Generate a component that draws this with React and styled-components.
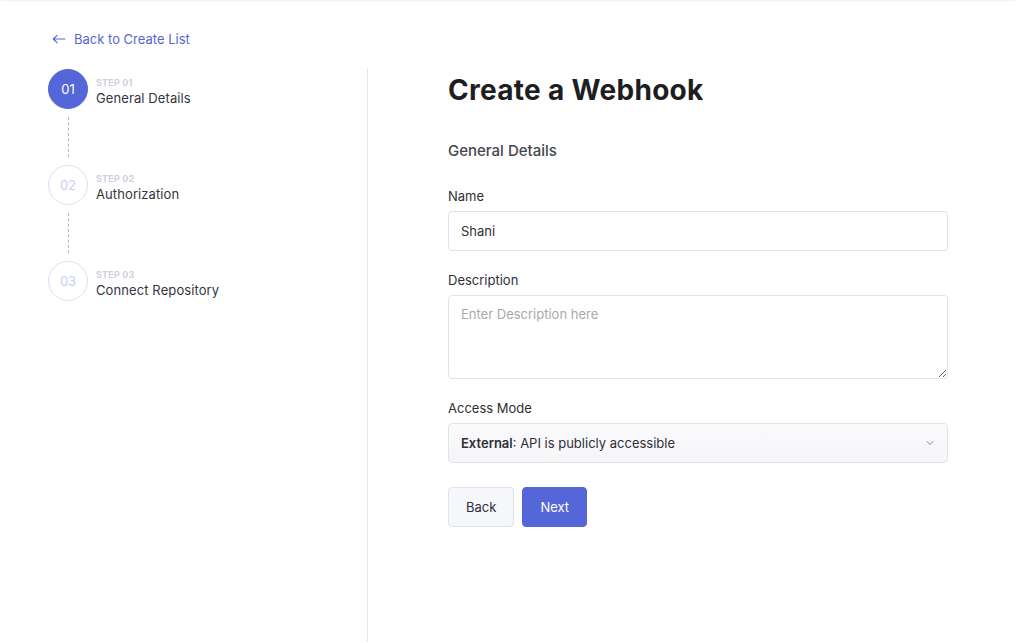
import React from 'react';
import styled, { createGlobalStyle } from 'styled-components';

const GlobalStyle = createGlobalStyle`
  html, body {
    margin: 0;
    padding: 0;
    background: #ffffff;
    font-family: 'Inter', 'Noto Sans', sans-serif;
    color: #2b2b33;
  }
  * {
    box-sizing: border-box;
  }
`;

const TopShadow = styled.div`
  height: 1px;
  background: #f2f2f4;
  box-shadow: 0 1px 3px rgba(0, 0, 0, 0.06);
`;

const Page = styled.div`
  height: 642px;
  display: flex;
  flex-direction: column;
`;

const BackLink = styled.a`
  display: flex;
  align-items: center;
  gap: 8px;
  margin: 28px 0 0 52px;
  height: 20px;
  font-size: 13px;
  color: #5567d5;
  text-decoration: none;
  cursor: pointer;
`;

const Columns = styled.div`
  flex: 1;
  display: grid;
  grid-template-columns: 368px 1fr;
  margin-top: 20px;
`;

const Sidebar = styled.aside`
  border-right: 1px solid #e4e4e8;
  padding-left: 48px;
`;

const Step = styled.div`
  display: flex;
  gap: 8px;
`;

const StepRail = styled.div`
  display: flex;
  flex-direction: column;
  align-items: center;
  width: 40px;
`;

const Circle = styled.div`
  width: 40px;
  height: 40px;
  border-radius: 50%;
  display: flex;
  align-items: center;
  justify-content: center;
  font-size: 13px;
  color: ${p => (p.active ? '#ffffff' : '#c9cdf2')};
  background: ${p => (p.active ? '#5567d8' : '#ffffff')};
  border: 1px solid ${p => (p.active ? '#5567d8' : '#dcdff5')};
`;

const Dashes = styled.div`
  height: 56px;
  padding: 8px 0;
  &::before {
    content: '';
    display: block;
    height: 100%;
    border-left: 1px dashed #b8b8bc;
  }
`;

const StepText = styled.div`
  padding-top: 8px;
`;

const StepNo = styled.div`
  font-size: 9px;
  font-weight: 700;
  letter-spacing: 0.2px;
  color: #cfd1dc;
  line-height: 11px;
`;

const StepName = styled.div`
  font-size: 13px;
  color: #34343c;
  line-height: 18px;
  margin-top: 1px;
  letter-spacing: 0.1px;
`;

const Main = styled.main`
  padding-left: 80px;
`;

const Form = styled.div`
  width: 500px;
`;

const Title = styled.h1`
  margin: 0;
  font-size: 28px;
  line-height: 42px;
  font-weight: 700;
  color: #1e1e22;
  letter-spacing: 0.3px;
`;

const Section = styled.h2`
  margin: 30px 0 0;
  font-size: 15px;
  line-height: 20px;
  font-weight: 500;
  color: #45454d;
`;

const Label = styled.label`
  display: block;
  font-size: 13px;
  line-height: 18px;
  color: #2f2f36;
  margin: ${p => (p.first ? '26px' : '20px')} 0 6px;
`;

const fieldBase = `
  width: 100%;
  border: 1px solid #e1e3ea;
  border-radius: 4px;
  font-family: 'Inter', 'Noto Sans', sans-serif;
  font-size: 13px;
  color: #2f2f36;
  outline: none;
`;

const Input = styled.input`
  ${fieldBase}
  display: block;
  height: 40px;
  padding: 0 12px;
  background: #ffffff;
`;

const TextArea = styled.textarea`
  ${fieldBase}
  display: block;
  height: 84px;
  padding: 10px 12px;
  resize: vertical;
  background: #ffffff;
  &::placeholder {
    color: #a9a9af;
  }
`;

const Select = styled.div`
  ${fieldBase}
  height: 40px;
  padding: 0 12px;
  display: flex;
  align-items: center;
  justify-content: space-between;
  background: linear-gradient(#fbfbfd, #f5f5f8);
  b {
    font-weight: 600;
  }
`;

const Buttons = styled.div`
  display: flex;
  gap: 8px;
  margin-top: 24px;
`;

const Button = styled.button`
  height: 40px;
  padding: 0 17px;
  border-radius: 4px;
  font-family: 'Inter', 'Noto Sans', sans-serif;
  font-size: 13px;
  cursor: pointer;
  border: 1px solid ${p => (p.primary ? '#5567d8' : '#e1e3ea')};
  background: ${p => (p.primary ? '#5567d8' : '#f6f7fb')};
  color: ${p => (p.primary ? '#ffffff' : '#2f2f36')};
`;

const steps = [
  { no: '01', name: 'General Details' },
  { no: '02', name: 'Authorization' },
  { no: '03', name: 'Connect Repository' },
];

const App = () => {
  return (
    <>
      <GlobalStyle />
      <Page>
        <TopShadow />
        <BackLink>
          <svg width="14" height="10" viewBox="0 0 14 10" fill="none" stroke="#5567d5" strokeWidth="1.2" strokeLinecap="round" strokeLinejoin="round">
            <path d="M13 5H1.5M5 1.3L1.3 5 5 8.7" />
          </svg>
          Back to Create List
        </BackLink>
        <Columns>
          <Sidebar>
            {steps.map((s, i) => (
              <Step key={s.no}>
                <StepRail>
                  <Circle active={i === 0}>{s.no}</Circle>
                  {i < steps.length - 1 && <Dashes />}
                </StepRail>
                <StepText>
                  <StepNo>STEP {s.no}</StepNo>
                  <StepName>{s.name}</StepName>
                </StepText>
              </Step>
            ))}
          </Sidebar>
          <Main>
            <Form>
              <Title>Create a Webhook</Title>
              <Section>General Details</Section>
              <Label first>Name</Label>
              <Input defaultValue="Shani" />
              <Label>Description</Label>
              <TextArea placeholder="Enter Description here" />
              <Label>Access Mode</Label>
              <Select>
                <span><b>External</b>: API is publicly accessible</span>
                <svg width="10" height="6" viewBox="0 0 10 6" fill="none" stroke="#8a8a92" strokeWidth="1" strokeLinecap="round">
                  <path d="M2 1.5L5 4.5 8 1.5" />
                </svg>
              </Select>
              <Buttons>
                <Button>Back</Button>
                <Button primary>Next</Button>
              </Buttons>
            </Form>
          </Main>
        </Columns>
      </Page>
    </>
  );
};

export default App;
